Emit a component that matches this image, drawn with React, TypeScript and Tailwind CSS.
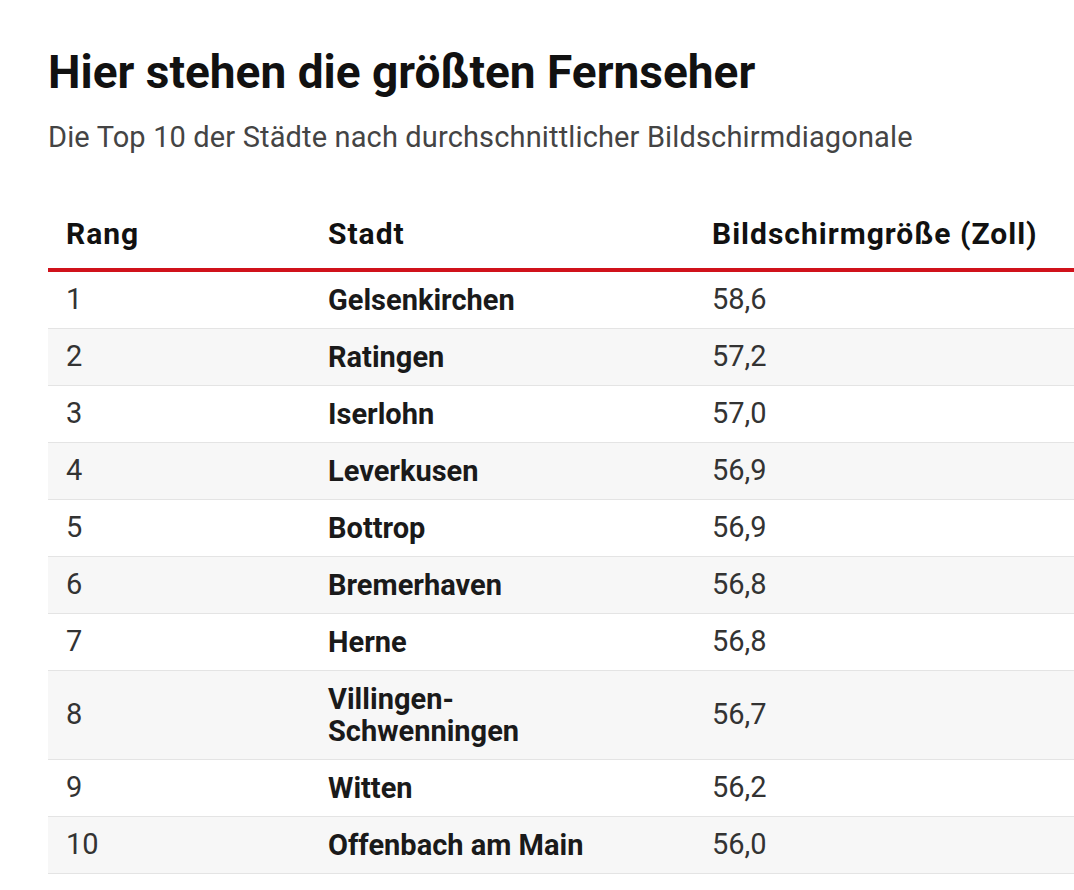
const rows = [
  { rank: "1", city: "Gelsenkirchen", size: "58,6" },
  { rank: "2", city: "Ratingen", size: "57,2" },
  { rank: "3", city: "Iserlohn", size: "57,0" },
  { rank: "4", city: "Leverkusen", size: "56,9" },
  { rank: "5", city: "Bottrop", size: "56,9" },
  { rank: "6", city: "Bremerhaven", size: "56,8" },
  { rank: "7", city: "Herne", size: "56,8" },
  { rank: "8", city: "Villingen-Schwenningen", size: "56,7" },
  { rank: "9", city: "Witten", size: "56,2" },
  { rank: "10", city: "Offenbach am Main", size: "56,0" },
];

const App = () => {
  return (
    <div className="w-[1074px] h-[890px] overflow-hidden bg-white font-['Roboto',sans-serif]">
      <div className="pl-[48px] pt-[45px]">
        <h1 className="text-[46px] leading-[55px] font-bold text-[#111]">
          Hier stehen die größten Fernseher
        </h1>
        <p className="mt-[20px] text-[29px] leading-[34px] tracking-[0.14px] text-[#444]">
          Die Top 10 der Städte nach durchschnittlicher Bildschirmdiagonale
        </p>
        <table className="mt-[46px] w-[1040px] table-fixed border-collapse">
          <colgroup>
            <col className="w-[262px]" />
            <col className="w-[384px]" />
            <col />
          </colgroup>
          <thead>
            <tr className="border-b-[4px] border-[#d0121b]">
              <th className="px-[18px] pt-[16px] pb-[16px] text-left align-middle text-[30px] leading-[36px] tracking-[1px] font-bold text-[#111]">
                Rang
              </th>
              <th className="px-[18px] pt-[16px] pb-[16px] text-left align-middle text-[30px] leading-[36px] tracking-[1px] font-bold text-[#111]">
                Stadt
              </th>
              <th className="px-[18px] pt-[16px] pb-[16px] text-left align-middle text-[30px] leading-[36px] tracking-[1px] font-bold text-[#111]">
                Bildschirmgröße (Zoll)
              </th>
            </tr>
          </thead>
          <tbody>
            {rows.map((row, i) => (
              <tr
                key={row.rank}
                className={`border-b border-[#e4e4e4] ${i % 2 === 1 ? "bg-[#f7f7f7]" : "bg-white"}`}
              >
                <td className="px-[18px] py-[12px] align-middle text-[29px] leading-[31.5px] text-[#333]">
                  {row.rank}
                </td>
                <td className="px-[18px] py-[12px] align-middle text-[29px] leading-[32px] font-bold text-[#1a1a1a]">
                  <div className="max-w-[280px]">{row.city}</div>
                </td>
                <td className="px-[18px] py-[12px] align-middle text-[29px] leading-[31.5px] text-[#333]">
                  {row.size}
                </td>
              </tr>
            ))}
          </tbody>
        </table>
      </div>
    </div>
  );
};

export default App;
